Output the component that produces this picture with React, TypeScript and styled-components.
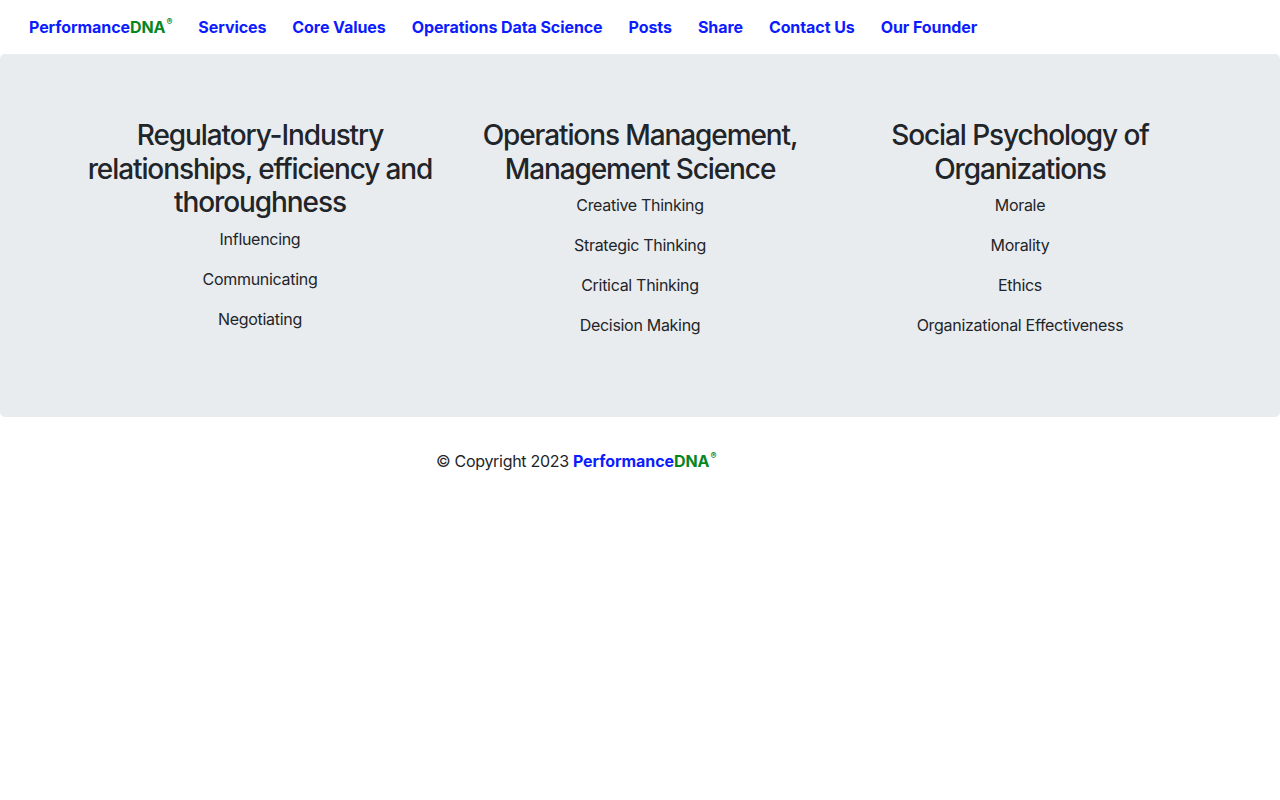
import React from "react";
import styled, { createGlobalStyle } from "styled-components";

const Global = createGlobalStyle`
  html, body { margin: 0; padding: 0; background: #fff; }
  body {
    font-family: Inter, "Noto Sans", "Liberation Sans", sans-serif;
    font-size: 16px;
    line-height: 1.5;
    color: #212529;
  }
  * { box-sizing: border-box; }
`;

const Nav = styled.nav`
  height: 54px;
  display: flex;
  align-items: center;
  gap: 26px;
  padding-left: 29px;
`;

const NavLink = styled.a`
  font-weight: 700;
  font-size: 16px;
  letter-spacing: -0.08px;
  color: #0c1cff;
  text-decoration: none;
  line-height: 24px;
  white-space: nowrap;
`;

const Green = styled.span`
  color: #06861f;
`;

const Reg = styled.sup`
  font-size: 9px;
  line-height: 0;
  position: relative;
  top: -2px;
  margin-left: 1px;
`;

const Jumbotron = styled.section`
  background: #e9ecef;
  border-radius: 4.8px;
  padding: 64px 32px;
  margin-bottom: 32px;
`;

const Container = styled.div`
  width: 1140px;
  margin: 0 auto;
`;

const Row = styled.div`
  display: grid;
  grid-template-columns: repeat(3, 1fr);
`;

const Col = styled.div`
  padding: 0 15px;
  text-align: center;
`;

const Heading = styled.h3`
  margin: 0 0 7px;
  padding-top: 1px;
  font-size: 28px;
  font-weight: 500;
  letter-spacing: -1.1px;
  line-height: 1.2;
`;

const Item = styled.p`
  margin: 0 0 16px;
  font-size: 16px;
  letter-spacing: -0.3px;
  line-height: 24px;
`;

const Footer = styled.footer`
  width: 1140px;
  margin: 0 auto;
  padding-left: 366px;
  line-height: 24px;
  letter-spacing: -0.3px;
`;

const Brand = styled.span`
  font-weight: 700;
  letter-spacing: -0.08px;
  color: #0c1cff;
`;

const Logo = () => (
  <>
    Performance<Green>DNA<Reg>®</Reg></Green>
  </>
);

const columns = [
  {
    title: "Regulatory-Industry relationships, efficiency and thoroughness",
    items: ["Influencing", "Communicating", "Negotiating"],
  },
  {
    title: "Operations Management, Management Science",
    items: ["Creative Thinking", "Strategic Thinking", "Critical Thinking", "Decision Making"],
  },
  {
    title: "Social Psychology of Organizations",
    items: ["Morale", "Morality", "Ethics", "Organizational Effectiveness"],
  },
];

const links = [
  "Services",
  "Core Values",
  "Operations Data Science",
  "Posts",
  "Share",
  "Contact Us",
  "Our Founder",
];

export default function App() {
  return (
    <>
      <Global />
      <Nav>
        <NavLink href="#">
          <Logo />
        </NavLink>
        {links.map((l) => (
          <NavLink key={l} href="#">
            {l}
          </NavLink>
        ))}
      </Nav>
      <Jumbotron>
        <Container>
          <Row>
            {columns.map((c) => (
              <Col key={c.title}>
                <Heading>{c.title}</Heading>
                {c.items.map((i) => (
                  <Item key={i}>{i}</Item>
                ))}
              </Col>
            ))}
          </Row>
        </Container>
      </Jumbotron>
      <Footer>
        © Copyright 2023{" "}
        <Brand>
          <Logo />
        </Brand>
      </Footer>
    </>
  );
}
